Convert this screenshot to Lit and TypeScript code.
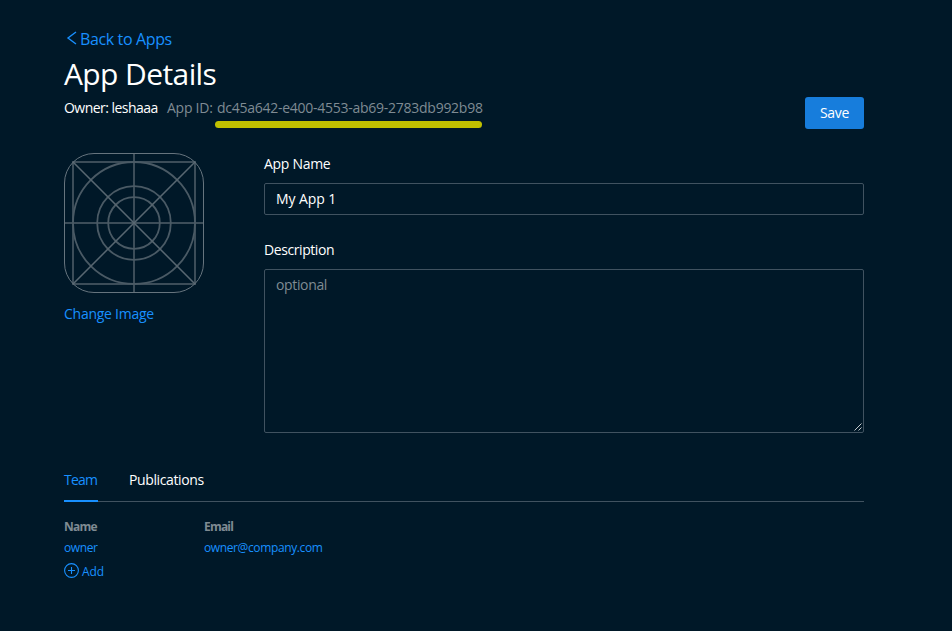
import { LitElement, html, css, svg } from "lit";
import { customElement } from "lit/decorators.js";

@customElement("app-icon-grid")
class AppIconGrid extends LitElement {
  static styles = css`
    :host { display: block; width: 140px; height: 140px; }
    svg { display: block; }
    .thin { fill: none; stroke: #66747e; stroke-width: 1; }
    .ring { fill: none; stroke: #4a5a65; stroke-width: 1.8; }
    .guide { fill: none; stroke: #3c4d59; stroke-width: 2; }
    .diag { fill: none; stroke: #586771; stroke-width: 1.5; }
  `;
  render() {
    return html`<svg width="140" height="140" viewBox="0 0 140 140">
      <path class="guide" d="M70 1V139M1 70H139M9 9H131V131H9Z" />
      ${[61, 36.8, 25.8].map((r) => svg`<circle class="ring" cx="70" cy="70" r=${r} />`)}
      <path class="diag" d="M9 9L131 131M131 9L9 131" />
      <rect class="thin" x="0.5" y="0.5" width="139" height="139" rx="29.5" />
    </svg>`;
  }
}

@customElement("app-root")
class AppRoot extends LitElement {
  static styles = css`
    :host {
      display: block; box-sizing: border-box; width: 952px; height: 631px;
      padding: 26px 88px 0 64px; background: #001828; color: #fff; overflow: hidden;
      font: 400 14px/22px "Open Sans", "Noto Sans", sans-serif; letter-spacing: -0.3px;
    }
    * { box-sizing: border-box; }
    a { color: #1890ff; text-decoration: none; }
    .back { display: flex; align-items: center; height: 24px; font-size: 16px; letter-spacing: -0.37px; }
    .back svg { width: 16px; height: 16px; flex: none; }
    .back-text { padding-top: 1px; }
    h1 { margin: 5px 0 0; font-size: 30px; line-height: 38px; font-weight: 400; letter-spacing: -0.6px; }
    .meta { display: flex; height: 60px; padding-top: 4px; }
    .owner { width: 103px; letter-spacing: -0.54px; }
    .muted { color: #7f8b93; }
    .id { position: relative; margin-left: 1px; }
    .mark { position: absolute; left: -2px; top: 23px; width: 267px; height: 7px; border-radius: 4px; background: #c0c000; }
    .appid { letter-spacing: -0.26px; white-space: nowrap; }
    .save { margin-left: auto; height: 32px; width: 59px; border: 0; border-radius: 3px; background: #177ddc;
      color: #fff; font: inherit; letter-spacing: -0.3px; padding: 0; }
    .main { display: flex; gap: 60px; height: 280px; }
    .side { width: 140px; }
    .side a { display: block; margin-top: 10px; letter-spacing: -0.26px; }
    .form { flex: 1; display: flex; flex-direction: column; }
    label { display: block; height: 30px; }
    .desc { letter-spacing: -0.42px; }
    .input { height: 32px; padding: 4px 11px; border: 1px solid #405260; border-radius: 2px; line-height: 22px; margin-bottom: 24px; letter-spacing: -0.08px; }
    .area { position: relative; height: 164px; padding: 4px 11px; border: 1px solid #405260; border-radius: 2px; letter-spacing: -0.35px; }
    .grip { position: absolute; right: 1px; bottom: 1px; width: 8px; height: 8px; }
    .tabs { display: flex; gap: 31px; margin-top: 29px; height: 40px; border-bottom: 1px solid #405260; letter-spacing: -0.38px; }
    .tab { height: 40px; padding-top: 7px; }
    .tab.active { width: 34px; color: #1890ff; border-bottom: 2px solid #1890ff; letter-spacing: -0.8px; }
    .team { display: grid; grid-template-columns: 140px 1fr; grid-template-rows: 21px 20px; margin-top: 14px; font-size: 12px; letter-spacing: -0.38px; }
    .team b { color: #7f8b93; letter-spacing: -0.8px; }
    .add { display: flex; align-items: center; gap: 3px; font-size: 12px; height: 24px; margin-top: 1px; }
    .add-text { padding-top: 3px; letter-spacing: -0.1px; }
  `;
  render() {
    return html`
      <a class="back"><svg viewBox="0 0 16 16" fill="none" stroke="#1890ff" stroke-width="1.4"><path d="M12 2L4 8L12 14" /></svg><span class="back-text">Back to Apps</span></a>
      <h1>App Details</h1>
      <div class="meta">
        <span class="owner">Owner: leshaaa</span>
        <span class="muted appid">App ID: <span class="id">dc45a642-e400-4553-ab69-2783db992b98<i class="mark"></i></span></span>
        <button class="save">Save</button>
      </div>
      <div class="main">
        <div class="side"><app-icon-grid></app-icon-grid><a>Change Image</a></div>
        <div class="form">
          <label>App Name</label>
          <div class="input">My App 1</div>
          <label class="desc">Description</label>
          <div class="area muted">optional
            <svg class="grip" viewBox="0 0 8 8" stroke="#c3c9cc" stroke-width="1"><path d="M0.5 7.5L7.5 0.5M4.5 7.5L7.5 4.5" /></svg>
          </div>
        </div>
      </div>
      <div class="tabs"><div class="tab active">Team</div><div class="tab">Publications</div></div>
      <div class="team"><b>Name</b><b>Email</b><a>owner</a><a>owner@company.com</a></div>
      <a class="add"><svg width="15" height="15" viewBox="0 0 15 15" fill="none" stroke="#1890ff" stroke-width="1.1"><circle cx="7.5" cy="7.5" r="6.9" /><path d="M7.5 4V11M4 7.5H11" /></svg><span class="add-text">Add</span></a>
    `;
  }
}
